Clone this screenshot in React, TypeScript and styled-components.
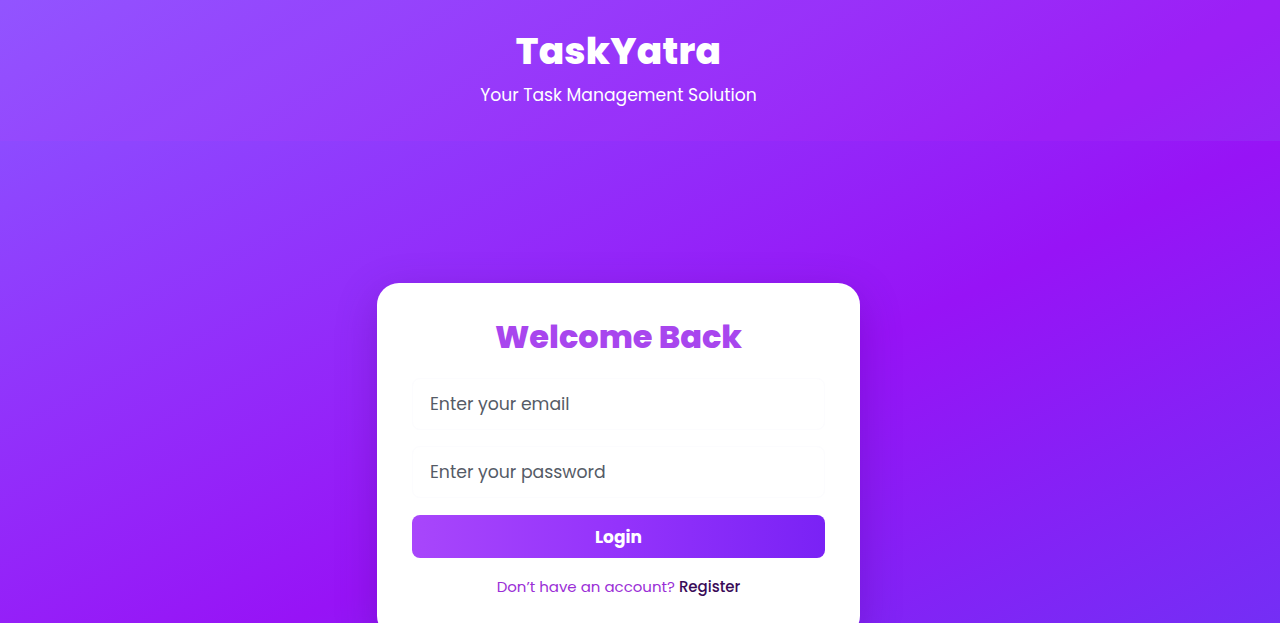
import React from "react";
import styled, { createGlobalStyle } from "styled-components";

const gradient = "linear-gradient(to bottom right, #8d4bff 0%, #9713f6 50%, #6a36f5 100%)";

const Global = createGlobalStyle`
  html, body { margin: 0; padding: 0; }
  body {
    font-family: "Poppins", "Open Sans", "Noto Sans", sans-serif;
    min-height: 100vh;
    background: ${gradient};
    overflow: hidden;
  }
`;

const Page = styled.div`
  display: flex;
  flex-direction: column;
`;

const Header = styled.header`
  height: 141px;
  box-sizing: border-box;
  padding: 28px 43px 0 0;
  background: rgba(255, 255, 255, 0.05);
  display: flex;
  flex-direction: column;
  align-items: center;
  color: #fff;
`;

const Brand = styled.h1`
  margin: 0;
  font-size: 37.5px;
  font-weight: 800;
  line-height: 46px;
  letter-spacing: 0.2px;
`;

const Tagline = styled.p`
  margin: 9px 0 0;
  font-size: 17.2px;
  line-height: 24px;
  font-weight: 400;
`;

const Main = styled.main`
  min-height: 100vh;
  box-sizing: border-box;
  background: ${gradient};
  display: flex;
  justify-content: center;
  align-items: flex-start;
  padding: 142px 43px 0 0;
`;

const Card = styled.div`
  width: 483px;
  box-sizing: border-box;
  background: #fff;
  border-radius: 22px;
  padding: 32px 35px 40px;
  box-shadow: 0 12px 40px rgba(60, 0, 120, 0.25);
  display: flex;
  flex-direction: column;
  align-items: stretch;
`;

const Title = styled.h2`
  margin: 0 0 19px;
  text-align: center;
  font-size: 32px;
  font-weight: 800;
  line-height: 44px;
  color: #a846ee;
`;

const Input = styled.input`
  height: 50px;
  border: 1px solid #fcfcfe;
  border-radius: 8px;
  padding: 0 17px;
  font-family: inherit;
  font-size: 17.3px;
  color: #333;
  background: #fff;
  outline: none;
  margin-bottom: 16px;
  &::placeholder { color: #555b66; }
`;

const Button = styled.button`
  height: 43px;
  margin-top: 1px;
  border: none;
  border-radius: 8px;
  background: linear-gradient(90deg, #a846fb 0%, #9433fb 50%, #7a22f5 100%);
  color: #fff;
  font-family: inherit;
  font-size: 17px;
  font-weight: 700;
  cursor: pointer;
`;

const Footer = styled.p`
  margin: 18px 0 0;
  text-align: center;
  font-size: 15px;
  line-height: 22px;
  color: #9a2ed6;
`;

const Link = styled.a`
  color: #3a0b58;
  font-weight: 500;
  text-decoration: none;
`;

export default function App() {
  return (
    <>
      <Global />
      <Page>
        <Header>
          <Brand>TaskYatra</Brand>
          <Tagline>Your Task Management Solution</Tagline>
        </Header>
        <Main>
          <Card>
            <Title>Welcome Back</Title>
            <Input type="email" placeholder="Enter your email" />
            <Input type="password" placeholder="Enter your password" />
            <Button>Login</Button>
            <Footer>
              Don’t have an account? <Link href="#">Register</Link>
            </Footer>
          </Card>
        </Main>
      </Page>
    </>
  );
}
